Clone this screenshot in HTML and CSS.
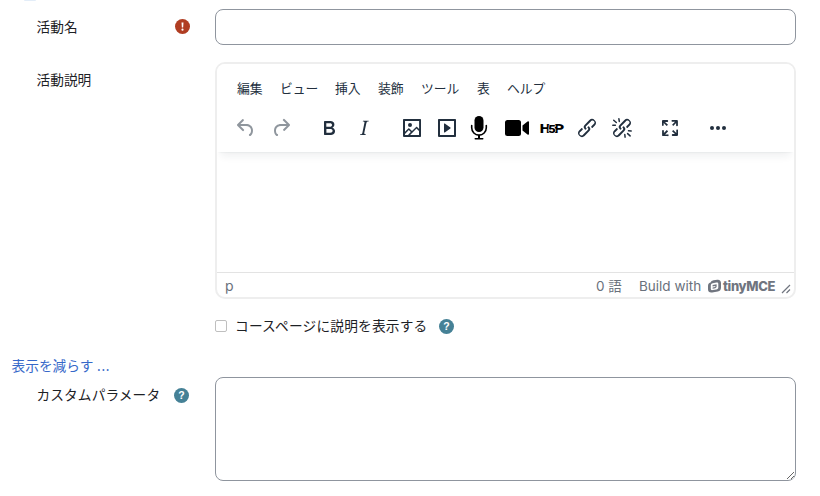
FILE: index.html
```html
<!DOCTYPE html>
<html lang="ja">
<head>
<meta charset="utf-8">
<title>活動設定</title>
<link rel="stylesheet" href="styles.css">
</head>
<body>
<form class="form">
  <div class="avatar-edge"></div>
  <div class="row row-name">
    <div class="label"><span>活動名</span>
      <svg class="badge" viewBox="0 0 15 15"><circle cx="7.5" cy="7.5" r="7.5" fill="#b03d22"/><path d="M6.5 3.6h2l-.35 4.900h-1.300z" fill="#fff"/><circle cx="7.5" cy="10.7" r="1.1" fill="#fff"/></svg>
    </div>
    <input class="text-input" type="text" aria-label="活動名">
  </div>

  <div class="row row-editor">
    <div class="label"><span>活動説明</span></div>
    <div class="editor">
      <div class="editor-head">
        <nav class="menubar"><span class="m-edit">編集</span><span class="m-view">ビュー</span><span class="m-insert">挿入</span><span class="m-format">装飾</span><span class="m-tools">ツール</span><span class="m-table">表</span><span>ヘルプ</span></nav>
        <div class="toolbar">
          <div class="group history">
            <svg class="icon" viewBox="0 0 24 24"><path d="M6.4 8H12c3.7 0 6.2 2 6.8 5.1.6 2.7-.4 5.6-2.3 6.8a1 1 0 0 1-1-1.8c1.1-.6 1.8-2.7 1.4-4.6-.5-2.1-2.1-3.5-4.9-3.5H6.4l3.3 3.3a1 1 0 1 1-1.4 1.4l-5-5a1 1 0 0 1 0-1.4l5-5a1 1 0 0 1 1.4 1.4L6.4 8Z"/></svg>
            <svg class="icon" viewBox="0 0 24 24"><path d="M17.6 10H12c-2.8 0-4.4 1.4-4.9 3.5-.4 2 .3 4 1.4 4.6a1 1 0 1 1-1 1.8c-2-1.2-2.9-4.1-2.3-6.8.6-3 3-5.1 6.8-5.1h5.6l-3.3-3.3a1 1 0 1 1 1.4-1.4l5 5a1 1 0 0 1 0 1.4l-5 5a1 1 0 0 1-1.4-1.4l3.3-3.3Z"/></svg>
          </div>
          <div class="group">
            <svg class="icon" viewBox="0 0 24 24"><path fill-rule="evenodd" d="M7.8 19c-.3 0-.5 0-.6-.2l-.2-.5V5.7c0-.2 0-.4.2-.5l.6-.2h5c1.5 0 2.7.3 3.5 1 .7.6 1.1 1.4 1.1 2.5a3 3 0 0 1-.6 1.9c-.4.6-1 1-1.6 1.2.4.1.9.3 1.3.6s.8.7 1 1.2c.4.4.5 1 .5 1.6 0 1.3-.4 2.3-1.3 3-.8.7-2.1 1-3.8 1H7.8Zm5-8.3c.6 0 1.2-.1 1.6-.5.4-.3.6-.7.6-1.3 0-1.1-.8-1.7-2.3-1.7H9.3v3.5h3.4Zm.5 6c.7 0 1.3-.1 1.7-.4.4-.4.6-.9.6-1.5s-.2-1-.7-1.4c-.4-.3-1-.4-2-.4H9.4v3.8h4Z"/></svg>
            <svg class="icon" viewBox="0 0 24 24"><path d="m16.7 4.7-.1.9h-.3c-.6 0-1 0-1.4.3-.3.3-.4.6-.5 1.1l-2.1 9.8v.6c0 .5.4.8 1.4.8h.2l-.2.8H8l.2-.8h.2c1.1 0 1.8-.5 2-1.5l2-9.8.1-.5c0-.6-.4-.8-1.4-.8h-.3l.2-.9h5.8Z"/></svg>
          </div>
          <div class="group">
            <svg class="icon" viewBox="0 0 24 24"><path fill-rule="evenodd" d="m5 15.7 3.3-3.2c.3-.3.7-.3 1 0L12 15l4.1-4c.3-.4.8-.4 1 0l2 1.9V5H5v10.7ZM5 18V19h3l2.8-2.9-2-2L5 17.9Zm14-3-2.5-2.4-6.4 6.5H19v-4ZM4 3h16c.6 0 1 .4 1 1v16c0 .6-.4 1-1 1H4a1 1 0 0 1-1-1V4c0-.6.4-1 1-1Z"/><circle cx="10" cy="9" r="2"/></svg>
            <svg class="icon" viewBox="0 0 24 24"><path fill-rule="evenodd" d="M4 3h16c.6 0 1 .4 1 1v16c0 .6-.4 1-1 1H4a1 1 0 0 1-1-1V4c0-.6.4-1 1-1Zm1 2v14h14V5H5Zm4.8 2.6 5.6 4a.5.5 0 0 1 0 .8l-5.6 4A.5.5 0 0 1 9 16V8a.5.5 0 0 1 .8-.4Z"/></svg>
            <svg class="icon solid mic" viewBox="0 0 24 24"><rect x="7.5" y="0" width="9" height="16" rx="4.5"/><path d="M4.7 9.5v2.3a7.3 7.3 0 0 0 14.6 0V9.5" fill="none" stroke="#000" stroke-width="1.6" stroke-linecap="round"/><path d="M11 19h2v3h2.8q.7 0 .7.8t-.7.8H8.2q-.7 0-.7-.8t.7-.8H11z"/></svg>
            <svg class="icon solid" viewBox="0 0 24 24"><rect x="0" y="4" width="16" height="16" rx="2.5"/><path d="M17.5 9.5l5-4q1.5-.8 1.5.8v11.400q0 1.600-1.500.8l-5-4z"/></svg>
            <svg class="icon solid h5p" viewBox="0 0 24 24"><text x="-.3" y="16.500" font-size="13.500" textLength="10.500" lengthAdjust="spacingAndGlyphs">H</text><text x="14" y="16.500" font-size="13.500" textLength="10.300" lengthAdjust="spacingAndGlyphs">P</text><text x="8.200" y="16.500" font-size="10.500" textLength="7.500" lengthAdjust="spacingAndGlyphs" stroke="#fff" stroke-width="1" paint-order="stroke">5</text></svg>
            <svg class="icon" viewBox="0 0 24 24"><path d="M6.2 12.3a1 1 0 0 1 1.4 1.4l-2 2a2 2 0 1 0 2.6 2.8l4.8-4.8a1 1 0 0 0 0-1.4 1 1 0 1 1 1.4-1.3 2.9 2.9 0 0 1 0 4L9.6 20a3.9 3.9 0 0 1-5.5-5.5l2-2Zm11.6-.6a1 1 0 0 1-1.4-1.4l2-2a2 2 0 1 0-2.6-2.8L11 10.3a1 1 0 0 0 0 1.4A1 1 0 1 1 9.6 13a2.9 2.9 0 0 1 0-4L14.4 4a3.9 3.9 0 0 1 5.5 5.5l-2 2Z"/></svg>
            <svg class="icon" viewBox="0 0 24 24"><path d="M6.2 12.3a1 1 0 0 1 1.4 1.4l-2 2a2 2 0 1 0 2.6 2.8l4.8-4.8a1 1 0 0 0 0-1.4 1 1 0 1 1 1.4-1.3 2.9 2.9 0 0 1 0 4L9.6 20a3.9 3.9 0 0 1-5.5-5.5l2-2Zm11.6-.6a1 1 0 0 1-1.4-1.4l2-2a2 2 0 1 0-2.6-2.8L11 10.3a1 1 0 0 0 0 1.4A1 1 0 1 1 9.6 13a2.9 2.9 0 0 1 0-4L14.4 4a3.9 3.9 0 0 1 5.5 5.5l-2 2Z"/><path d="M3.7 4.2l2.6 2.3M8.9 2.8l.4 2.600M2.800 9.200l2.600.1M17.600 17.600l2.500 2.300M18.500 14.800l2.700.1M14.800 18.600l.3 2.600" fill="none" stroke="#222f3e" stroke-width="1.500" stroke-linecap="round"/></svg>
          </div>
          <div class="group"><svg class="icon" viewBox="0 0 24 24"><path d="m15.3 10-1.2-1.3 2.9-3h-2.3a.9.9 0 1 1 0-1.700H19c.5 0 .9.4.9.9v4.400a.9.9 0 1 1-1.800 0V7l-2.900 3Zm0 4 3 3v-2.300a.9.9 0 1 1 1.700 0V19c0 .5-.4.9-.9.9h-4.400a.9.9 0 1 1 0-1.800H17l-3-2.900 1.300-1.200ZM10 15.400l-2.900 3h2.300a.9.9 0 1 1 0 1.700H5a.9.9 0 0 1-.9-.9v-4.400a.9.9 0 1 1 1.800 0V17l2.900-3 1.200 1.300ZM8.700 10 5.700 7v2.300a.9.9 0 0 1-1.700 0V5c0-.5.4-.9.9-.9h4.400a.9.9 0 0 1 0 1.800H7l3 2.900-1.300 1.200Z"/></svg></div>
          <div class="group"><svg class="icon" viewBox="0 0 24 24"><circle cx="6" cy="12" r="2"/><circle cx="12" cy="12" r="2"/><circle cx="18" cy="12" r="2"/></svg></div>
        </div>
      </div>
      <div class="editor-body"></div>
      <div class="statusbar">
        <span class="path">p</span>
        <span class="words">0 語</span>
        <span class="build">Build with</span>
        <span class="brand"><svg class="mark" viewBox="0 0 13 14"><path fill-rule="evenodd" d="M5.500 1.300 9.300.7c2.300-.3 3.700 1 3.700 3.200v4.600c0 2.300-1 3.500-3.200 4l-5.600 1C1.600 13.900 0 12.800 0 10.300V7c0-2 .7-3.300 2.500-3.600Q3.100 1.700 5.500 1.300ZM4.800 4.300c-1.400.2-2 .9-2 2.300v3c0 1.300.7 1.800 2 1.500l3.500-.6c1.300-.3 2-.9 2-2.300V5.100c0-1.300-.7-1.700-2-1.500z"/><path d="M4.600 6 8.600 5.300V8L7.300 9.200 4.600 9.700V8.400L7.300 7.900V6.900L4.600 7.400z"/></svg><span class="wordmark">tinyMCE</span></span>
        <svg class="grip" viewBox="0 0 10 10"><path d="M1 9 9 1M5.500 9 9 5.500" fill="none" stroke="#70757f" stroke-width="1.200"/></svg>
      </div>
    </div>
  </div>

  <div class="check-row">
    <span class="checkbox"></span><span class="check-label">コースページに説明を表示する</span>
    <svg class="badge" viewBox="0 0 15 15"><circle cx="7.5" cy="7.5" r="7.5" fill="#458196"/><text class="q" x="7.5" y="11.200">?</text></svg>
  </div>

  <a class="less">表示を減らす <span class="dots">...</span></a>
  <div class="row row-params">
    <div class="label"><span class="params-label">カスタムパラメータ</span>
      <svg class="badge" viewBox="0 0 15 15"><circle cx="7.5" cy="7.5" r="7.5" fill="#458196"/><text class="q" x="7.5" y="11.200">?</text></svg>
    </div>
    <textarea class="params" aria-label="カスタムパラメータ"></textarea>
  </div>
</form>
</body>
</html>
```
FILE: styles.css
```css
* { box-sizing: border-box; }
body {
  margin: 0;
  background: #fff;
  color: #1d2125;
  font: 13.7px/20px "Noto Sans", "Noto Sans CJK JP", sans-serif;
  overflow: hidden;
}
.form { display: flex; flex-direction: column; width: 796px; height: 496px; }
.avatar-edge {
  height: 1px;
  width: 12px;
  margin-left: 24px;
  background: #e3edf8;
  border-radius: 0 0 6px 6px;
}
.row { display: grid; grid-template-columns: 215px 581px; }
.label {
  display: flex;
  align-items: center;
  justify-content: space-between;
  height: 20px;
  padding: 0 25px 0 36.5px;
  white-space: nowrap;
}
.badge { display: block; width: 15px; height: 15px; flex: none; }
.q { fill: #fff; font: bold 10.5px "Liberation Sans", sans-serif; text-anchor: middle; }
.row-name { margin-top: 8px; height: 36px; }
.row-name .label { margin-top: 8px; }
.row-name .badge { margin-top: -2px; }
.text-input {
  width: 581px;
  height: 36px;
  border: 1px solid #8f959e;
  border-radius: 8px;
  background: #fff;
}
.row-editor { margin-top: 17px; height: 237px; }
.row-editor .label { margin-top: 8px; }
.editor {
  display: flex;
  flex-direction: column;
  height: 237px;
  border: 2px solid #eee;
  border-radius: 10px;
  overflow: hidden;
}
.editor-head {
  height: 88px;
  flex: none;
  background: #fff;
  box-shadow: 0 2px 2px -2px rgba(34, 47, 62, .1), 0 8px 8px -4px rgba(34, 47, 62, .07);
}
.menubar {
  display: flex;
  padding: 14px 0 0 20px;
  height: 44px;
  color: #222f3e;
  font-size: 12.8px;
  line-height: 20px;
  white-space: nowrap;
}
.m-edit { width: 43px; }
.m-view { width: 55px; }
.m-insert { width: 43px; }
.m-format { width: 43px; }
.m-tools { width: 56px; }
.m-table { width: 30px; }
.toolbar { display: flex; gap: 24px; padding: 8px 0 0 17px; }
.group { display: flex; gap: 11px; }
.history { opacity: .5; }
.icon { width: 24px; height: 24px; fill: #222f3e; overflow: visible; flex: none; }
.solid { fill: #000; }
.mic { margin: 0 3px 0 -3px; }
.h5p text { font-family: Roboto, sans-serif; font-weight: 900; }
.editor-body { flex: 1; }
.statusbar {
  display: flex;
  align-items: center;
  height: 25px;
  padding: 2px 3px 0 8px;
  border-top: 1px solid #e3e3e3;
  color: #6a717c;
  font-family: Inter, "Noto Sans CJK JP", sans-serif;
  font-size: 13.5px;
  white-space: nowrap;
}
.path { flex: 1; font-size: 14px; }
.words { width: 43px; }
.build { width: 69px; }
.brand { display: flex; align-items: center; width: 70px; color: #70757f; }
.mark { width: 13px; height: 14px; margin-right: 2px; fill: #70757f; flex: none; }
.wordmark { font: 800 13px/20px Inter, sans-serif; letter-spacing: -.35px; }
.grip { width: 10px; height: 10px; margin: 6px 0 0 3px; }
.check-row { display: flex; align-items: center; height: 20px; margin-top: 17px; padding-left: 215px; }
.checkbox { width: 12px; height: 12px; border: 1px solid #bfbfbf; border-radius: 2px; }
.check-label { width: 204px; margin-left: 8px; letter-spacing: .2px; white-space: nowrap; }
.less { height: 20px; margin: 20px 0 0 11.5px; color: #3668c9; }
.dots { letter-spacing: .8px; }
.row-params { margin-top: 1px; height: 104px; }
.row-params .label { margin-top: 8px; padding-right: 26px; }
.params-label { letter-spacing: .1px; }
.params {
  display: block;
  width: 581px;
  height: 104px;
  border: 1px solid #8f959e;
  border-radius: 8px;
  background: #fff;
  resize: vertical;
}
```
